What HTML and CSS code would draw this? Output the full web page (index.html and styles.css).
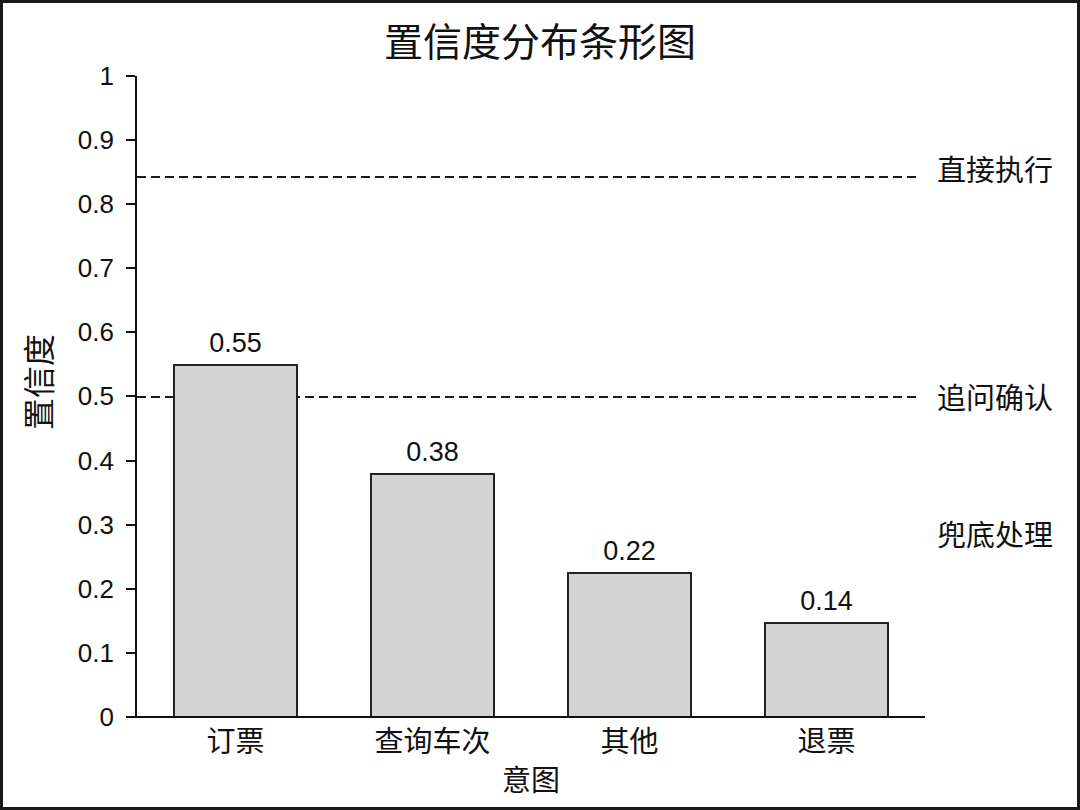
FILE: index.html
```html
<!DOCTYPE html>
<html lang="zh-CN">
<head>
<meta charset="utf-8">
<title>置信度分布条形图</title>
<link rel="stylesheet" href="styles.css">
</head>
<body>
<div class="frame">
  <h1 class="title">置信度分布条形图</h1>
  <div class="chart">
    <div class="ylab"><span>置信度</span></div>
    <div class="ticks">
      <div class="tick"><span>1</span><i></i></div>
      <div class="tick"><span>0.9</span><i></i></div>
      <div class="tick"><span>0.8</span><i></i></div>
      <div class="tick"><span>0.7</span><i></i></div>
      <div class="tick"><span>0.6</span><i></i></div>
      <div class="tick"><span>0.5</span><i></i></div>
      <div class="tick"><span>0.4</span><i></i></div>
      <div class="tick"><span>0.3</span><i></i></div>
      <div class="tick"><span>0.2</span><i></i></div>
      <div class="tick"><span>0.1</span><i></i></div>
      <div class="tick"><span>0</span><i></i></div>
    </div>
    <div class="plot">
      <div class="thr thr-high"></div>
      <div class="thr thr-mid"></div>
      <div class="note note-high">直接执行</div>
      <div class="note note-mid">追问确认</div>
      <div class="note note-low">兜底处理</div>
      <div class="bars">
        <div class="slot"><span class="val">0.55</span><div class="bar" style="height:55%"></div></div>
        <div class="slot"><span class="val">0.38</span><div class="bar" style="height:38%"></div></div>
        <div class="slot"><span class="val">0.22</span><div class="bar" style="height:22.5%"></div></div>
        <div class="slot"><span class="val">0.14</span><div class="bar" style="height:14.7%"></div></div>
      </div>
    </div>
  </div>
  <div class="cats">
    <span>订票</span>
    <span>查询车次</span>
    <span>其他</span>
    <span>退票</span>
  </div>
  <div class="xlab">意图</div>
</div>
</body>
</html>
```
FILE: styles.css
```css
* { box-sizing: border-box; }
html, body { margin: 0; padding: 0; background: #fff; }
body {
  width: 1080px;
  height: 810px;
  font-family: "Liberation Sans", Arial, "Noto Sans CJK SC", sans-serif;
  color: #111;
}
.frame {
  width: 1080px;
  height: 810px;
  border: 3px solid #1a1a1a;
  display: flex;
  flex-direction: column;
  overflow: hidden;
}
.title {
  margin: 17px 0 0;
  font-family: "Noto Sans CJK SC", sans-serif;
  font-weight: 400;
  font-size: 39px;
  line-height: 39px;
  text-align: center;
}
.chart {
  display: flex;
  margin-top: 17px;
  height: 642px;
}
.ylab {
  width: 60px;
  display: flex;
  align-items: center;
  justify-content: center;
  padding: 0 0 30px 8px;
}
.ylab span {
  writing-mode: vertical-rl;
  text-orientation: sideways;
  transform: rotate(180deg);
  font-family: "Noto Sans CJK SC", sans-serif;
  font-size: 32px;
  line-height: 1;
}
.ticks {
  width: 72px;
  height: 641px;
  display: flex;
  flex-direction: column;
  justify-content: space-between;
}
.tick {
  height: 0;
  display: flex;
  align-items: center;
  justify-content: flex-end;
}
.tick span {
  font-size: 26px;
  line-height: 1;
  margin-right: 12px;
}
.tick i {
  display: block;
  width: 9px;
  height: 2px;
  background: #111;
}
.plot {
  position: relative;
  width: 790px;
  height: 642px;
  border-left: 2px solid #111;
  border-bottom: 2px solid #111;
}
.thr {
  position: absolute;
  left: 0;
  right: 7px;
  height: 2px;
  background: repeating-linear-gradient(to right, #1a1a1a 0 9px, transparent 9px 14px);
}
.thr-high { top: 100px; }
.thr-mid { top: 320px; }
.note {
  position: absolute;
  left: calc(100% + 12px);
  white-space: nowrap;
  font-family: "Noto Sans CJK SC", sans-serif;
  font-size: 29px;
  line-height: 1;
  transform: translateY(-50%);
}
.note-high { top: 92px; }
.note-mid { top: 320px; }
.note-low { top: 457px; }
.bars {
  position: relative;
  display: flex;
  height: 100%;
}
.slot {
  flex: 1;
  display: flex;
  flex-direction: column;
  align-items: center;
  justify-content: flex-end;
}
.val {
  font-size: 27px;
  line-height: 1;
  margin-bottom: 7px;
}
.bar {
  width: 125px;
  background: #d4d4d4;
  border: 2px solid #222;
  border-bottom: 0;
}
.cats {
  display: flex;
  margin-left: 134px;
  width: 788px;
  margin-top: 7px;
}
.cats span {
  flex: 1;
  text-align: center;
  font-family: "Noto Sans CJK SC", sans-serif;
  font-size: 29px;
  line-height: 1;
}
.xlab {
  margin-left: 134px;
  width: 788px;
  margin-top: 10px;
  text-align: center;
  font-family: "Noto Sans CJK SC", sans-serif;
  font-size: 29px;
  line-height: 1;
}
```
